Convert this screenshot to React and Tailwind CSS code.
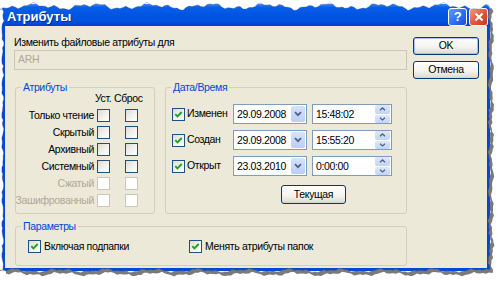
import React from 'react';

const noise = (t, s) => Math.sin(t * 0.9 + s) * 0.9 + Math.sin(t * 2.3 + s * 2) * 0.6 + Math.sin(t * 5.1 + s * 3) * 0.45;

// torn paper outline, built once
const buildOutline = () => {
    const pts = [];
    for (let x = 0; x <= 489; x += 3) pts.push([x, 6.5 + 2.2 * noise(x * 0.12, 1)]);
    for (let y = 8; y <= 270; y += 3) pts.push([489.5 + 1.1 * noise(y * 0.2, 2), y]);
    for (let x = 489; x >= 0; x -= 3) pts.push([x, 270.5 + 1.4 * noise(x * 0.15, 3)]);
    for (let y = 270; y >= 8; y -= 3) pts.push([2.6 + 0.9 * noise(y * 0.25, 4), y]);
    return pts;
};
const OUTLINE = buildOutline();
const toPath = (dx, dy) => 'M' + OUTLINE.map(([x, y]) => `${(x + dx).toFixed(1)} ${(y + dy).toFixed(1)}`).join(' L') + ' Z';

const TornEdges = () => (
    <svg className="absolute inset-0 pointer-events-none" width="500" height="286" viewBox="0 0 500 286">
        <defs>
            <mask id="paper">
                <rect x="0" y="0" width="500" height="286" fill="white" />
                <path d={toPath(0, 0)} fill="black" />
            </mask>
            <filter id="soft" x="-5%" y="-5%" width="110%" height="110%">
                <feGaussianBlur stdDeviation="0.7" />
            </filter>
        </defs>
        <g mask="url(#paper)">
            <rect x="0" y="0" width="500" height="286" fill="white" />
            <path d={toPath(3, 3.5)} fill="#7a7a7a" filter="url(#soft)" />
        </g>
        <path d={toPath(0, 0)} fill="none" stroke="#3d4a6a" strokeWidth="0.6" strokeOpacity="0.55" />
    </svg>
);

const CheckBox = ({ checked, disabled }) => (
    <div
        className={`w-[13px] h-[13px] shrink-0 border flex items-center justify-center ${disabled
            ? 'border-[#CAC8BB] bg-white'
            : 'border-[#1C5180] bg-[linear-gradient(135deg,#DCDCD7_0%,#F2F2EF_55%,#FFFFFF_100%)]'
            }`}
    >
        {checked && (
            <svg width="11" height="11" viewBox="0 0 11 11">
                <path d="M2.3 5.2 L4.4 7.4 L8.7 3" stroke="#21A121" strokeWidth="1.9" fill="none" />
            </svg>
        )}
    </div>
);

const XpButton = ({ children, isDefault, className = '' }) => (
    <div
        className={`h-[18px] border border-[#003C74] rounded-[3px] flex items-center justify-center bg-[linear-gradient(180deg,#FFFFFF_0%,#F5F4EF_55%,#E3E0D6_90%,#D6D0C5_100%)] ${isDefault ? 'shadow-[inset_0_0_0_1px_#A4C2F0]' : ''
            } ${className}`}
    >
        {children}
    </div>
);

const Group = ({ label, className = '', children }) => (
    <div className={`relative border border-[#D0D0BF] rounded-[3px] ${className}`}>
        <span className="absolute -top-[7px] left-[5px] px-[2px] bg-[#ECE9D8] text-[#0046D5] leading-[13px]">{label}</span>
        {children}
    </div>
);

const DateBox = ({ value }) => (
    <div className="w-[74px] h-[20px] border border-[#7F9DB9] bg-white flex items-center">
        <span className="flex-1 pl-[3px] leading-[13px]">{value}</span>
        <div className="w-[14px] h-[16px] mr-[1px] rounded-[2px] bg-[linear-gradient(180deg,#D6E3FD_0%,#BCCDF8_100%)] flex items-center justify-center">
            <svg width="8" height="6" viewBox="0 0 8 6">
                <path d="M1 1.2 L4 4.2 L7 1.2" stroke="#4D6185" strokeWidth="1.7" fill="none" />
            </svg>
        </div>
    </div>
);

const TimeBox = ({ value }) => (
    <div className="w-[80px] h-[20px] ml-[5px] border border-[#7F9DB9] bg-white flex items-center">
        <span className="flex-1 pl-[3px] leading-[13px]">{value}</span>
        <div className="w-[15px] h-[18px] mr-[1px] flex flex-col gap-[1px]">
            <div className="flex-1 rounded-[2px] bg-[linear-gradient(180deg,#DDE7FD_0%,#C3D3F9_100%)] flex items-center justify-center">
                <svg width="7" height="4" viewBox="0 0 7 4">
                    <path d="M1 3.3 L3.5 1 L6 3.3" stroke="#4D6185" strokeWidth="1.3" fill="none" />
                </svg>
            </div>
            <div className="flex-1 rounded-[2px] bg-[linear-gradient(180deg,#DDE7FD_0%,#C3D3F9_100%)] flex items-center justify-center">
                <svg width="7" height="4" viewBox="0 0 7 4">
                    <path d="M1 0.8 L3.5 3 L6 0.8" stroke="#4D6185" strokeWidth="1.3" fill="none" />
                </svg>
            </div>
        </div>
    </div>
);

const attrRows = [
    { name: 'Только чтение' },
    { name: 'Скрытый' },
    { name: 'Архивный' },
    { name: 'Системный' },
    { name: 'Сжатый', disabled: true },
    { name: 'Зашифрованный', disabled: true },
];

const dateRows = [
    { name: 'Изменен', date: '29.09.2008', time: '15:48:02' },
    { name: 'Создан', date: '29.09.2008', time: '15:55:20' },
    { name: 'Открыт', date: '23.03.2010', time: '0:00:00' },
];

export default function App() {
    return (
        <div className="relative w-[500px] h-[286px] bg-white overflow-hidden font-['Liberation_Sans',Arial,sans-serif] text-[10.5px] tracking-[-0.35px] text-black">
            <div className="ml-[2px] mt-[4px] w-[488px] h-[267px] flex flex-col">
                {/* title bar */}
                <div className="h-[22px] rounded-t-[6px] flex items-center pt-[3px] pl-[5px] pr-[2px] bg-[linear-gradient(180deg,#3D8BFA_0%,#0A5FE8_14%,#0055E5_45%,#0051DE_80%,#0041C4_100%)]">
                    <span className="flex-1 text-white font-bold text-[13px] tracking-normal leading-[16px] [text-shadow:1px_1px_0_#0A2A8A]">Атрибуты</span>
                    <div className="flex gap-[2px]">
                        <div className="w-[19px] h-[18px] rounded-[3px] border border-white bg-[linear-gradient(135deg,#5C9BFF_0%,#2A6BF0_60%,#1A50D8_100%)] flex items-center justify-center text-white font-bold text-[13px] leading-none">
                            ?
                        </div>
                        <div className="w-[19px] h-[18px] rounded-[3px] border border-white bg-[linear-gradient(135deg,#F09A80_0%,#E2553A_55%,#C8381C_100%)] flex items-center justify-center">
                            <svg width="10" height="10" viewBox="0 0 10 10">
                                <path d="M1.5 1.5 L8.5 8.5 M8.5 1.5 L1.5 8.5" stroke="white" strokeWidth="2" />
                            </svg>
                        </div>
                    </div>
                </div>

                {/* body */}
                <div className="flex-1 bg-[#ECE9D8] border-x-[3px] border-b-[3px] border-[#0648D6] flex pl-[9px] pt-[10px]">
                    <div className="w-[393px] flex flex-col">
                        <span className="leading-[13px]">Изменить файловые атрибуты для</span>
                        <div className="mt-[1px] h-[20px] border border-[#C9C7BA] flex items-center pl-[3px] text-[#ACA899]">АRН</div>

                        <div className="mt-[17px] flex">
                            <Group label="Атрибуты" className="ml-[1px] w-[140px] h-[127px]">
                                <div className="pt-[4px] pl-[79px] leading-[13px] whitespace-nowrap">Уст. Сброс</div>
                                <div className="mt-[2px] flex flex-col">
                                    {attrRows.map(r => (
                                        <div key={r.name} className="h-[17px] flex items-center">
                                            <div className="w-[78px] flex justify-end">
                                                <span className={`whitespace-nowrap ${r.disabled ? 'text-[#ACA899]' : ''}`}>{r.name}</span>
                                            </div>
                                            <div className="ml-[3px]"><CheckBox disabled={r.disabled} /></div>
                                            <div className="ml-[15px]"><CheckBox disabled={r.disabled} /></div>
                                        </div>
                                    ))}
                                </div>
                            </Group>

                            <Group label="Дата/Время" className="ml-[10px] w-[242px] h-[127px] pl-[6px] pt-[16px]">
                                <div className="flex flex-col gap-[6px]">
                                    {dateRows.map(r => (
                                        <div key={r.name} className="h-[20px] flex items-center">
                                            <CheckBox checked />
                                            <span className="ml-[2px] w-[46px]">{r.name}</span>
                                            <DateBox value={r.date} />
                                            <TimeBox value={r.time} />
                                        </div>
                                    ))}
                                </div>
                                <XpButton className="mt-[9px] ml-[109px] w-[65px] h-[19px]">Текущая</XpButton>
                            </Group>
                        </div>

                        <Group label="Параметры" className="mt-[12px] ml-[1px] w-[392px] h-[40px] flex items-center pl-[12px] pt-[1px]">
                            <div className="w-[161px] flex items-center">
                                <CheckBox checked />
                                <span className="ml-[3px]">Включая подпапки</span>
                            </div>
                            <div className="flex items-center">
                                <CheckBox checked />
                                <span className="ml-[3px]">Менять атрибуты папок</span>
                            </div>
                        </Group>
                    </div>

                    <div className="ml-[6px] mt-[1px] w-[66px] flex flex-col gap-[6px]">
                        <XpButton isDefault>OK</XpButton>
                        <XpButton>Отмена</XpButton>
                    </div>
                </div>
            </div>
            <TornEdges />
        </div>
    );
}
